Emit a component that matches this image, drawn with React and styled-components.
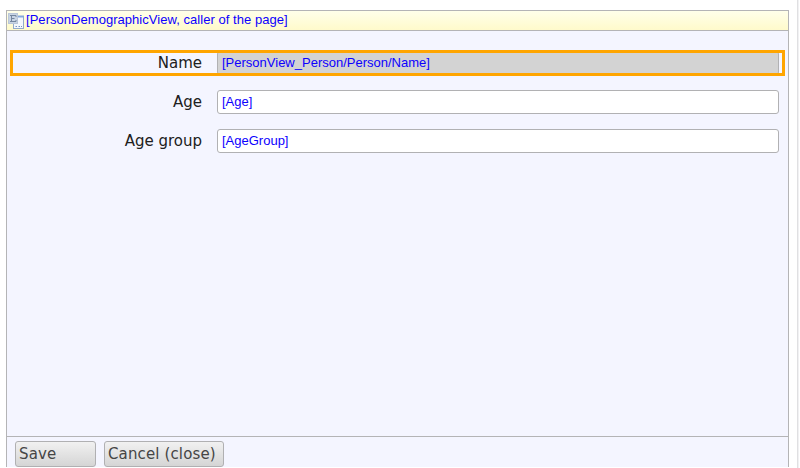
import React from "react";
import styled, { createGlobalStyle } from "styled-components";

const GlobalStyle = createGlobalStyle`
  * { box-sizing: border-box; }
  body { margin: 0; background: #fff; overflow: hidden; }
`;

const Page = styled.main`
  width: 798px;
  height: 468px;
  padding: 10px 0 1px 6px;
  border-right: 1px solid #e0e0e2;
  box-shadow: 1px 0 0 #f1f1f3;
`;

const Panel = styled.section`
  display: flex;
  flex-direction: column;
  width: 783px;
  height: 457px;
  border: 1px solid #b4b4b6;
  border-bottom: 0;
  background: #f4f5ff;
`;

const Header = styled.header`
  display: flex;
  align-items: center;
  height: 20px;
  padding-left: 1px;
  border-bottom: 1px solid #b4b4b6;
  background: linear-gradient(#ffffea, #fffacb);
`;

const Binding = styled.span`
  color: #0c00ff;
  font: 13px/18px "Liberation Sans", Arial, sans-serif;
  letter-spacing: ${(p) => p.$spacing || "0"};
  white-space: nowrap;
`;

const HeaderTitle = styled(Binding)`
  padding-bottom: 1px;
`;

const HeaderIcon = styled.svg`
  flex: none;
  width: 16px;
  height: 16px;
  margin-right: 2px;
`;

const Form = styled.div`
  flex: 1;
  padding: 19px 3px 0;
`;

const Row = styled.div`
  display: grid;
  grid-template-columns: 192px 562px;
  column-gap: 15px;
  align-items: center;
  height: 26px;
  margin-bottom: 13px;
  outline: ${(p) => (p.$selected ? "3px solid #ffa500" : "0")};
  outline-offset: -3px;
`;

const Label = styled.label`
  color: #202020;
  font: 15px/20px "DejaVu Sans", Verdana, sans-serif;
  text-align: right;
  white-space: nowrap;
`;

const Field = styled.div`
  display: flex;
  align-items: center;
  height: 24px;
  padding: 0 4px 1px;
  border: 1px solid #b1b1b3;
  border-radius: 3px;
  background: ${(p) => (p.$disabled ? "#d3d3d3" : "#fff")};
`;

const Footer = styled.footer`
  display: flex;
  gap: 8px;
  height: 31px;
  padding: 4px 8px 0;
  border-top: 1px solid #b4b4b6;
`;

const Button = styled.button`
  width: ${(p) => p.$width}px;
  height: 26px;
  padding: 0 0 1px 3px;
  border: 1px solid #b0b0b2;
  border-radius: 3px;
  background: linear-gradient(#f1f1f1, #d5d5d5);
  color: #454545;
  font: 15px/20px "DejaVu Sans", Verdana, sans-serif;
  letter-spacing: 0.13px;
  text-align: left;
  white-space: nowrap;
`;

function EntityIcon() {
  return (
    <HeaderIcon viewBox="0 0 16 16" aria-hidden="true">
      <rect x="5.5" y="3.5" width="10" height="12" fill="#f4f8fd" stroke="#93abcb" />
      <path d="M6 3.5h10" stroke="#84a9dc" strokeWidth="2" />
      <path d="M7.5 13.5H9M10.5 13.5H12M13 13.5h1" stroke="#7896c0" />
      <rect x="0.5" y="0.5" width="9" height="10" fill="#c8d4e4" stroke="#bac7d9" />
      <path d="M2 2.5h6v1.5M3.5 2.5v6M2 8.5h6V7M4 5.5h2.5" fill="none" stroke="#74869f" />
    </HeaderIcon>
  );
}

const fields = [
  { label: "Name", binding: "[PersonView_Person/Person/Name]", selected: true },
  { label: "Age", binding: "[Age]" },
  { label: "Age group", binding: "[AgeGroup]" },
];

export default function App() {
  return (
    <>
      <GlobalStyle />
      <Page>
        <Panel>
          <Header>
            <EntityIcon />
            <HeaderTitle $spacing="0.04px">[PersonDemographicView, caller of the page]</HeaderTitle>
          </Header>
          <Form>
            {fields.map((f) => (
              <Row key={f.label} $selected={f.selected}>
                <Label>{f.label}</Label>
                <Field $disabled={f.selected}>
                  <Binding>{f.binding}</Binding>
                </Field>
              </Row>
            ))}
          </Form>
          <Footer>
            <Button $width={81}>Save</Button>
            <Button $width={120}>Cancel (close)</Button>
          </Footer>
        </Panel>
      </Page>
    </>
  );
}
